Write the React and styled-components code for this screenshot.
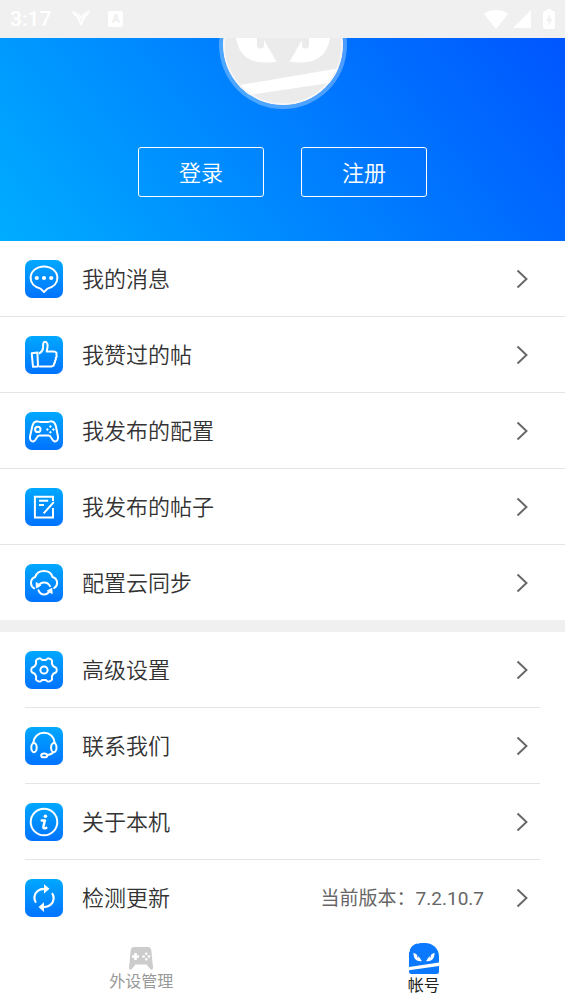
import React from 'react';
import styled, { createGlobalStyle } from 'styled-components';

const GlobalStyle = createGlobalStyle`
  * {
    box-sizing: border-box;
  }
  body {
    margin: 0;
    background: #ffffff;
    font-family: Roboto, "Noto Sans CJK SC", sans-serif;
    color: #333333;
  }
  button {
    font-family: inherit;
    cursor: pointer;
  }
`;

/* ---------- icons ---------- */

const gearPath = () => {
  const points = [];
  for (let deg = 0; deg < 360; deg += 4) {
    const a = (deg * Math.PI) / 180;
    const r = 11.3 + 1.4 * Math.tanh(2 * Math.cos(6 * a));
    points.push(`${(19 + r * Math.cos(a)).toFixed(2)} ${(19 + r * Math.sin(a)).toFixed(2)}`);
  }
  return `M${points.join('L')}Z`;
};

const MessageIcon = () => (
  <Glyph viewBox="0 0 38 38">
    <path d="M15.5 28.6C9.5 27.2 5.6 23 5.6 17.8 5.6 11.4 11.5 6.4 19 6.4s13.4 5 13.4 11.4c0 5.2-3.9 9.4-9.900 10.800L19 32z" />
    <g fill="#fff" stroke="none">
      <circle cx="11.8" cy="18" r="2.1" />
      <circle cx="19" cy="18" r="2.1" />
      <circle cx="26.2" cy="18" r="2.1" />
    </g>
  </Glyph>
);

const LikeIcon = () => (
  <Glyph viewBox="0 0 38 38">
    <path d="M6.700 17.200 12.400 16.400 13 30.400 8 30.800z" />
    <path d="M14.600 17.200c2.400-1.600 3.500-3.400 3.500-5.800 0-2.600-.2-5.600 2-5.600 2.200 0 2.800 3.200 2.400 5.400l-.8 4.200h7.200c2.300 0 3.200 1.800 2.400 3.200.6 1.200.4 2.500-.5 3.200.4 1.200 0 2.300-.8 3 .3 1.200-.1 2.300-1 2.900.1 1.600-.8 2.800-2.600 2.800H14.800" />
  </Glyph>
);

const ConfigIcon = () => (
  <Glyph viewBox="0 0 38 38">
    <path d="M11 9.400c1.800-.3 2.600.6 4.200.6h7.600c1.600 0 2.400-.9 4.200-.6 2.200.4 3.200 2 3.800 4.400l2.100 10.400c.6 2.800-.6 5.200-2.700 5.300-3.600.2-3.400-6-6.600-6h-9.200c-3.200 0-3 6.200-6.600 6-2.100-.1-3.300-2.500-2.700-5.300l2.300-10.400c.6-2.400 1.600-4 3.800-4.400z" />
    <circle cx="12.800" cy="17.400" r="2.700" />
    <path d="M25.400 13l1.400 1.500-1.400 1.500-1.400-1.500zM25.400 18.800l1.400 1.500-1.400 1.500-1.400-1.500zM22.400 15.900l1.400 1.500-1.400 1.500-1.400-1.500zM28.400 15.900l1.400 1.500-1.400 1.500-1.400-1.500z" fill="#fff" stroke="none" />
  </Glyph>
);

const PostIcon = () => (
  <Glyph viewBox="0 0 38 38" $butt>
    <path d="M28 13V8.700H9.900v20.900H28V20" />
    <path d="M14 12.800h9.200M14 17h5M18.600 25.400 28.800 14.200" />
  </Glyph>
);

const CloudIcon = () => (
  <Glyph viewBox="0 0 38 38">
    <path d="M9.200 24.300C7.200 23.300 6 21.300 6 19c0-3 1.800-5.200 4.200-6C11.200 9.400 14.600 6.900 18.900 6.900s7.700 2.500 8.600 6.100c2.700.7 4.600 3 4.600 5.900 0 2.200-1.100 4-2.900 5.100" />
    <path d="M13.300 22.300c1.200-2.500 3.300-3.900 5.800-3.900 2.600 0 4.700 1.300 5.900 3.700M13.500 26.300c1 2.600 3 4.100 5.500 4.100 2.700 0 4.800-1.500 5.900-4.100" />
    <path d="M11.200 18.900l.1 5 4.200-2.500zM27.200 29.200l-.4-4.800-4.200 2.300z" fill="#fff" strokeWidth="1" />
  </Glyph>
);

const SettingsIcon = () => (
  <Glyph viewBox="0 0 38 38">
    <path d={gearPath()} />
    <circle cx="19" cy="19" r="3.600" />
  </Glyph>
);

const ContactIcon = () => (
  <Glyph viewBox="0 0 38 38">
    <path d="M8.300 16v-.5C8.800 9.900 13.300 5.800 19 5.800s10.100 4.100 10.600 9.700v.5" />
    <ellipse cx="9" cy="20.600" rx="2.700" ry="4.600" />
    <ellipse cx="28.800" cy="20.600" rx="2.700" ry="4.600" />
    <path d="M28 25.300c-.7 1.400-2.200 2.200-5.300 2.700" />
    <ellipse cx="19.200" cy="28.400" rx="3" ry="1.900" />
  </Glyph>
);

const AboutIcon = () => (
  <Glyph viewBox="0 0 38 38">
    <circle cx="19" cy="19" r="13.300" />
    <circle cx="20.400" cy="13.200" r="1.800" fill="#fff" stroke="none" />
    <path d="M16.700 17.500h3.200l-1.600 6.400c-.3 1.400.8 1.700 3 .9" strokeWidth="2.400" />
  </Glyph>
);

const UpdateIcon = () => (
  <Glyph viewBox="0 0 38 38" $butt>
    <path d="M11 23.600C9.700 21.900 9.200 20.100 9.400 17.900c.4-4.700 4.500-8.300 10.500-8.100M27 14.200c1.300 1.700 1.800 3.600 1.600 5.800-.4 4.700-4.500 8.300-10.500 8.100" strokeWidth="2.200" />
    <path d="M19 5.200l5.500 4.600-5.500 4.800zM19 23.300l-5.500 4.800 5.500 4.800z" fill="#fff" stroke="none" />
  </Glyph>
);

const Chevron = () => (
  <Arrow viewBox="0 0 12 20" aria-hidden="true">
    <path d="M1.500 1.500 10.500 10 1.500 18.500" fill="none" stroke="#666666" strokeWidth="1.900" />
  </Arrow>
);

const AvatarFace = () => (
  <svg viewBox="0 0 120 120" width="100%" height="100%" aria-hidden="true">
    <circle cx="60" cy="60" r="60" fill="#ebebeb" />
    <g fill="#ffffff">
      <path d="M12 44C13 64 20 74 34 76.800c7 1 13 .9 19.500 0L41 55V40z" />
      <path d="M108 44c-1 20-8 30-22 32.800-7 1-13 .9-19.500 0L79 55V40z" />
      <path d="M0 103 120 82.500V96L0 114z" />
    </g>
    <path d="M34 40h7v20a3.500 3.500 0 0 1-7 0zM79 40h7v20a3.500 3.500 0 0 1-7 0z" fill="#ebebeb" />
    <circle cx="60" cy="60" r="59" fill="none" stroke="#f5f5f5" strokeWidth="2" />
  </svg>
);

const PadTabIcon = () => (
  <svg viewBox="0 0 24 23" width="24" height="23" aria-hidden="true">
    <path d="M5.500 0h13c2.300 0 3.500 1.100 3.800 3.500L24 20.500c.2 2-1.700 2.800-2.800 1.500L17.500 17.500h-11L2.800 22C1.700 23.300-.2 22.500 0 20.500L1.700 3.500C2 1.100 3.200 0 5.500 0z" fill="#cccccc" />
    <path d="M5.200 6h2.600v2.200H10v2.600H7.800V13H5.200v-2.200H3V8.200h2.200z" fill="#fff" />
    <g fill="#fff">
      <circle cx="17.300" cy="6.800" r="1.300" />
      <circle cx="17.300" cy="12.200" r="1.300" />
      <circle cx="14.600" cy="9.500" r="1.300" />
      <circle cx="20" cy="9.500" r="1.300" />
    </g>
  </svg>
);

const FaceTabIcon = () => (
  <svg viewBox="0 0 30 31" width="30" height="31" aria-hidden="true">
    <path d="M0 24V9.500L1 8V6.500C2.500 3.500 4.500 1.500 7.500.6L9 1l1-.7C12 0 14 0 16 0c8 .2 13.700 5.500 14 13v6.600zM0 27.300 30 23v5.500c0 1.700-.8 2.500-2.500 2.500h-25C.8 31 0 30.200 0 28.500z" fill="#0a78ff" />
    <path d="M4.500 9.800c2.700.9 6 3.700 8.300 8.300C8.500 19 4.200 16.500 4.500 9.800zM25.500 9.800c-2.700.9-6 3.700-8.300 8.300 4.300.9 8.600-1.600 8.300-8.300z" fill="#fff" />
    <path d="M8.800 12.200v2M21.200 12.200v2" stroke="#0a78ff" strokeLinecap="round" />
  </svg>
);

/* ---------- data ---------- */

const postItems = [
  { label: '我的消息', Icon: MessageIcon },
  { label: '我赞过的帖', Icon: LikeIcon },
  { label: '我发布的配置', Icon: ConfigIcon },
  { label: '我发布的帖子', Icon: PostIcon },
  { label: '配置云同步', Icon: CloudIcon },
];

const systemItems = [
  { label: '高级设置', Icon: SettingsIcon },
  { label: '联系我们', Icon: ContactIcon },
  { label: '关于本机', Icon: AboutIcon },
  { label: '检测更新', Icon: UpdateIcon, value: '当前版本：7.2.10.7' },
];

const MenuRow = ({ label, Icon, value }) => (
  <Row>
    <RowButton type="button">
      <IconTile>
        <Icon />
      </IconTile>
      <Label>{label}</Label>
      {value && <Value>{value}</Value>}
      <Chevron />
    </RowButton>
  </Row>
);

const StatusBar = () => (
  <Status>
    <Time>3:17</Time>
    <svg viewBox="0 0 18 16" width="18" height="16" aria-hidden="true">
      <path d="M0 0c4 1 7 2.600 9 5.600C11 2.600 14 1 18 0c-1 3-2.500 5-4.500 5.800L9 15.500 4.500 5.800C2.500 5 1 3 0 0z" fill="#fff" />
      <path d="M3 2.200C6 3.600 8 6 9 10.500 10 6 12 3.600 15 2.200" fill="none" stroke="#f0f0f0" strokeWidth=".8" />
    </svg>
    <AppBadge>A</AppBadge>
    <Signals>
      <svg viewBox="0 0 24 19" width="24" height="19" aria-hidden="true">
        <path d="M0 4C7-1.300 17-1.300 24 4L12 19z" fill="#fff" />
      </svg>
      <svg viewBox="0 0 18 18" width="18" height="18" aria-hidden="true">
        <path d="M18 0v18H0z" fill="#fff" />
      </svg>
      <Battery viewBox="0 0 12 20" aria-hidden="true">
        <path d="M3.500 0h5v2H11l1 1v16l-1 1H1l-1-1V3l1-1h2.500z" fill="#fff" />
        <path d="M7 5 3 12h2.500v5L9.500 10H7z" fill="#f0f0f0" />
      </Battery>
    </Signals>
  </Status>
);

const App = () => {
  return (
    <Page>
      <GlobalStyle />
      <StatusBar />
      <Profile>
        <Avatar>
          <AvatarFace />
        </Avatar>
        <Actions>
          <OutlineButton type="button">登录</OutlineButton>
          <OutlineButton type="button">注册</OutlineButton>
        </Actions>
      </Profile>
      <main>
        <Menu>
          {postItems.map((item) => (
            <MenuRow key={item.label} {...item} />
          ))}
        </Menu>
        <Divider />
        <Menu $inset>
          {systemItems.map((item) => (
            <MenuRow key={item.label} {...item} />
          ))}
        </Menu>
      </main>
      <TabBar>
        <Tab type="button">
          <PadTabIcon />
          外设管理
        </Tab>
        <Tab type="button" $active aria-current="page">
          <FaceTabIcon />
          帐号
        </Tab>
      </TabBar>
    </Page>
  );
};

/* ---------- styles ---------- */

const Page = styled.div`
  display: flex;
  flex-direction: column;
  min-height: 100vh;
`;

const Status = styled.header`
  display: flex;
  align-items: center;
  height: 38px;
  padding: 0 10px;
  background: #f0f0f0;
  color: #ffffff;
`;

const Time = styled.span`
  margin-right: 21px;
  font-size: 21px;
  font-weight: 500;
  line-height: 38px;
`;

const AppBadge = styled.span`
  width: 15px;
  height: 16px;
  margin-left: 18px;
  border-radius: 2px;
  background: #ffffff;
  color: #f0f0f0;
  font-size: 12px;
  font-weight: 900;
  line-height: 16px;
  text-align: center;
`;

const Signals = styled.div`
  display: flex;
  align-items: center;
  gap: 5px;
  margin-left: auto;
`;

const Battery = styled.svg`
  width: 12px;
  height: 20px;
  margin-left: 7px;
`;

const Profile = styled.section`
  display: flex;
  flex-direction: column;
  align-items: center;
  gap: 38px;
  padding-bottom: 44px;
  overflow: hidden;
  background: linear-gradient(52deg, #00adff, #0055ff);
`;

const Avatar = styled.div`
  width: 128px;
  height: 128px;
  margin-top: -57px;
  padding: 4px;
  border-radius: 50%;
  background: rgba(255, 255, 255, 0.3);
  svg {
    display: block;
    border-radius: 50%;
  }
`;

const Actions = styled.div`
  display: flex;
  gap: 37px;
`;

const OutlineButton = styled.button`
  width: 126px;
  height: 50px;
  padding: 0 0 3px;
  border: 1px solid #ffffff;
  border-radius: 3px;
  background: transparent;
  color: #ffffff;
  font-size: 22px;
  font-weight: 350;
`;

const Row = styled.li`
  border-bottom: 1px solid #e5e5e5;
  &:last-child {
    border-bottom: none;
  }
`;

const RowButton = styled.button`
  display: flex;
  align-items: center;
  width: 100%;
  height: 75px;
  border: none;
  background: transparent;
  color: #333333;
  text-align: left;
`;

const Menu = styled.ul`
  margin: 0;
  padding: ${({ $inset }) => ($inset ? '0 25px' : '0')};
  list-style: none;
  ${RowButton} {
    padding: ${({ $inset }) => ($inset ? '0 12px 0 0' : '0 37px 0 25px')};
  }
`;

const IconTile = styled.span`
  display: flex;
  width: 38px;
  height: 38px;
  margin-right: 19px;
  border-radius: 7px;
  background: linear-gradient(#00a8ff, #0073ff);
`;

const Glyph = styled.svg`
  width: 38px;
  height: 38px;
  fill: none;
  stroke: #ffffff;
  stroke-width: 2;
  stroke-linecap: ${({ $butt }) => ($butt ? 'butt' : 'round')};
  stroke-linejoin: ${({ $butt }) => ($butt ? 'miter' : 'round')};
`;

const Label = styled.span`
  flex: 1;
  padding-top: 2px;
  font-size: 22px;
  font-weight: 350;
  line-height: 32px;
`;

const Value = styled.span`
  margin-right: 32px;
  padding-top: 2px;
  color: #666666;
  font-size: 19px;
  line-height: 32px;
`;

const Arrow = styled.svg`
  width: 12px;
  height: 20px;
`;

const Divider = styled.div`
  height: 12px;
  background: #f0f0f0;
`;

const TabBar = styled.nav`
  display: flex;
  height: 69px;
`;

const Tab = styled.button`
  display: flex;
  flex: 1;
  flex-direction: column;
  align-items: center;
  justify-content: center;
  gap: 2px;
  padding: 0;
  border: none;
  background: transparent;
  color: ${({ $active }) => ($active ? '#222222' : '#999999')};
  font-size: 16px;
  line-height: 20px;
`;

export default App;
